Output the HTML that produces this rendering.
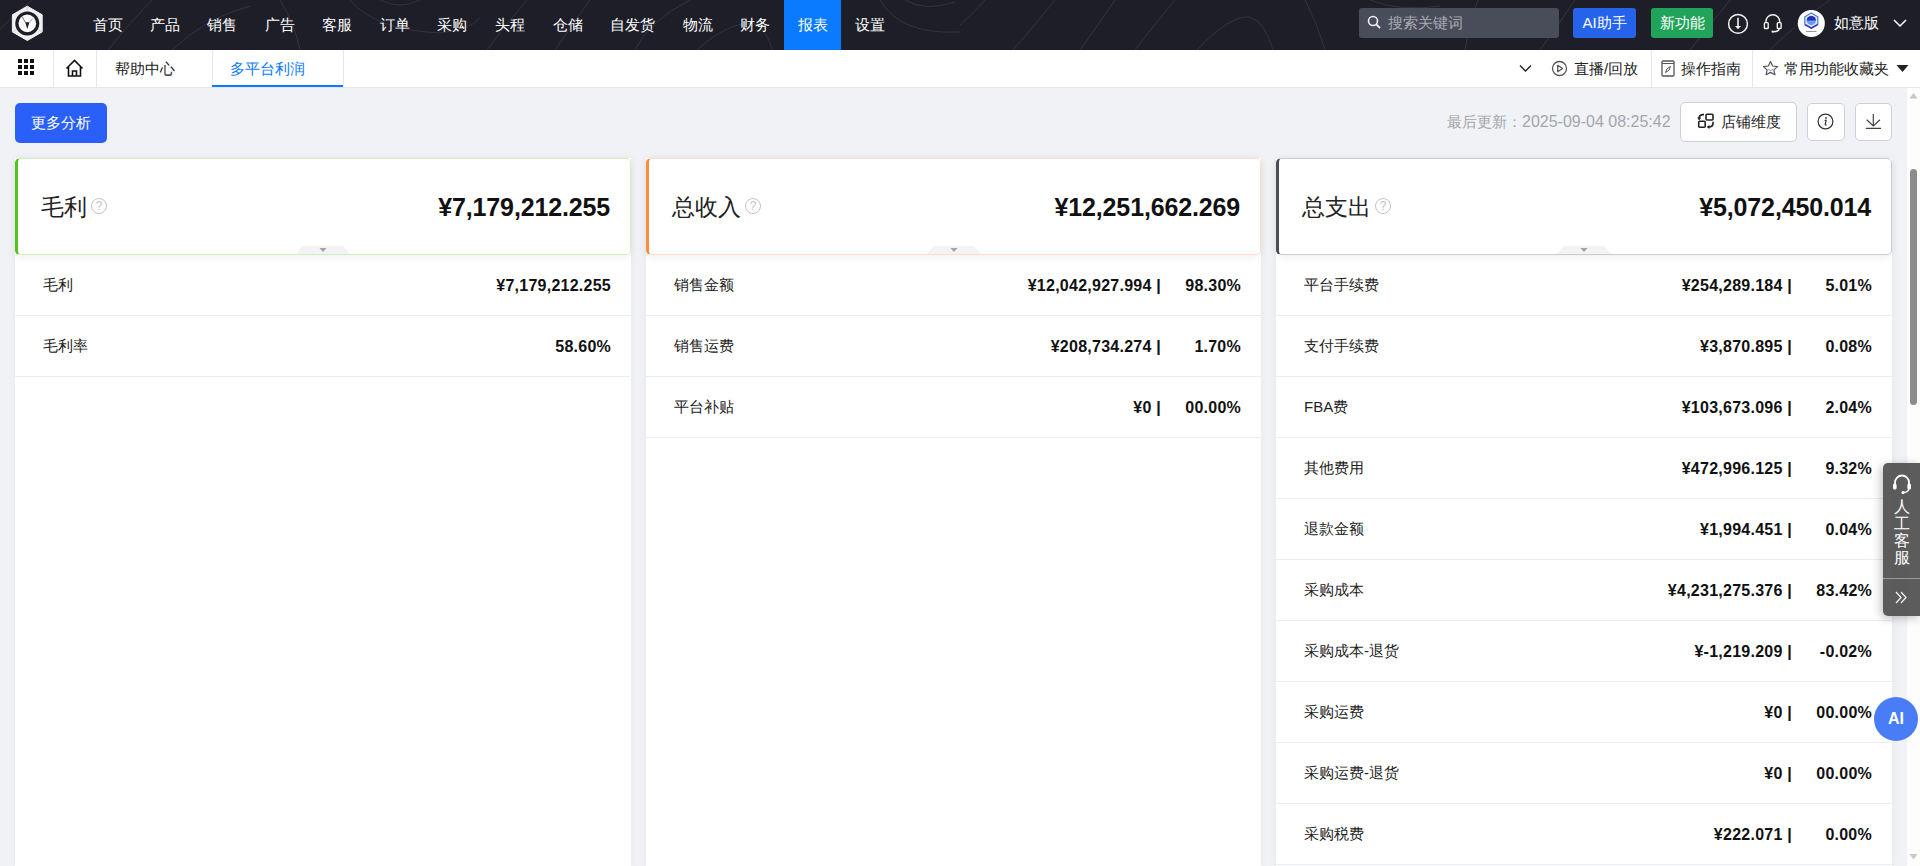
<!DOCTYPE html>
<html><head><meta charset="utf-8">
<style>
*{box-sizing:border-box;margin:0;padding:0}
html,body{width:1920px;height:866px;overflow:hidden;background:#f0f2f5;font-family:"Liberation Sans",sans-serif;color:#222}
.abs{position:absolute}
#top{position:absolute;left:0;top:0;width:1920px;height:50px;background:#1e1e28;overflow:hidden}
.nav{position:absolute;top:0;height:50px;line-height:49px;color:#fff;font-size:15px;font-weight:500;white-space:nowrap}
.nav.active{background:#0a7bff}
#bar2{position:absolute;left:0;top:50px;width:1920px;height:38px;background:#fff;border-bottom:1px solid #e4e6eb}
.vsep{position:absolute;top:0;width:1px;height:37px;background:#e6e8ec}
.t14{font-size:15px;color:#222}
.card{position:absolute;background:#fff;box-shadow:0 0 8px rgba(0,0,0,0.05)}
.hdr{position:absolute;left:0;top:0;height:97px;background:#fff;border:1px solid;border-left-width:3px;border-radius:5px;box-shadow:0 3px 8px rgba(0,0,0,0.06)}
.title{position:absolute;left:23px;top:33px;font-size:23px;color:#222;line-height:30px}
.q{display:inline-block;width:16px;height:16px;border:1px solid #c4c4c4;border-radius:50%;color:#c4c4c4;font-size:12px;line-height:14px;text-align:center;vertical-align:5px;margin-left:4px}
.big{position:absolute;right:20px;top:32px;font-size:25px;font-weight:bold;color:#111;line-height:32px;letter-spacing:-0.15px}
.row{position:absolute;left:0;height:61px;border-bottom:1px solid #e9eef5;width:100%}
.row .lab{position:absolute;left:28px;top:0;line-height:60px;font-size:15px;color:#222}
.row .val{position:absolute;right:20px;top:1px;letter-spacing:0.25px;line-height:60px;font-size:16px;font-weight:bold;color:#111;white-space:pre}
.tab{position:absolute;width:54px;height:8px;left:50%;margin-left:-28px;bottom:0}
</style></head><body>
<div id="top">
  <svg class="abs" style="left:0;top:0" width="1920" height="50">
    <g fill="none" stroke="#33333f" stroke-width="1">
      <path d="M0 29 Q18 12 32 0"/>
      <path d="M108 50 Q130 22 152 0"/>
      <path d="M172 50 Q205 18 250 6"/>
      <path d="M280 0 Q295 25 300 50"/>
      <path d="M350 0 Q375 30 440 33 Q470 30 480 18"/>
      <path d="M380 0 Q400 10 420 0"/>
      <path d="M487 50 Q505 25 527 0"/>
      <path d="M555 50 Q572 25 590 0"/>
      <path d="M635 50 Q650 20 690 0"/>
      <path d="M697 50 Q730 20 755 24 Q768 32 772 50"/>
      <path d="M880 0 Q900 35 960 32"/>
      <path d="M905 0 Q925 12 955 2"/>
      <path d="M960 25 Q975 12 985 0"/>
      <path d="M1013 50 Q1035 25 1055 0"/>
      <path d="M1080 50 Q1098 25 1115 0"/>
      <path d="M1135 50 Q1150 30 1175 0"/>
      <path d="M1197 50 Q1230 15 1250 17 Q1265 22 1273 50"/>
      <path d="M1305 0 Q1318 25 1325 50"/>
      <path d="M1370 0 Q1400 12 1440 6"/>
      <path d="M1465 50 Q1470 20 1478 0"/>
      <path d="M1540 50 Q1558 25 1575 0"/>
      <path d="M1690 50 Q1710 25 1730 0"/>
      <path d="M1770 50 Q1800 20 1830 0"/>
    </g>
  </svg>
  <svg class="abs" style="left:0;top:0" width="50" height="50">
    <polygon points="27.3,6.2 42.2,14.8 42.2,31.9 27.3,40.5 12.4,31.9 12.4,14.8" fill="#f0f0f0" stroke="#f0f0f0" stroke-width="1" stroke-linejoin="round"/>
    <path d="M27.3 6.5 V11 M12.6 31.8 L16.5 29.5 M42 31.8 L38 29.5" stroke="#c8c8c8" stroke-width="0.8"/>
    <circle cx="27.3" cy="23.4" r="12" fill="#1e1e28"/>
    <circle cx="27.3" cy="23.4" r="8.8" fill="#fafafa"/>
    <path d="M25.2 22.2 L29.4 22.2 L27.3 29 Z" fill="#1e1e28"/>
    <path d="M22.5 17 Q24 20.5 25.5 22.3" stroke="#1e1e28" stroke-width="0.6" fill="none"/>
    <path d="M32.5 18.5 Q31 21.5 29.3 22.3" stroke="#1e1e28" stroke-width="0.4" fill="none"/>
  </svg>
  <div class="abs" style="left:784px;top:0;width:57px;height:50px;background:#0a7bff"></div>
  <div class="nav" style="left:92.5px">首页</div>
  <div class="nav" style="left:149.5px">产品</div>
  <div class="nav" style="left:207px">销售</div>
  <div class="nav" style="left:264.5px">广告</div>
  <div class="nav" style="left:322px">客服</div>
  <div class="nav" style="left:380px">订单</div>
  <div class="nav" style="left:437px">采购</div>
  <div class="nav" style="left:495px">头程</div>
  <div class="nav" style="left:552.5px">仓储</div>
  <div class="nav" style="left:610px">自发货</div>
  <div class="nav" style="left:682.5px">物流</div>
  <div class="nav" style="left:740px">财务</div>
  <div class="nav" style="left:797.5px">报表</div>
  <div class="nav" style="left:855px">设置</div>

  <div class="abs" style="left:1359px;top:8px;width:200px;height:30px;background:#494d5a;border-radius:3px"></div>
  <svg class="abs" style="left:1367px;top:15px" width="14" height="15"><circle cx="6" cy="6" r="4.5" fill="none" stroke="#eee" stroke-width="1.6"/><path d="M9.3 9.3 L13 13" stroke="#eee" stroke-width="1.8"/></svg>
  <div class="abs" style="left:1388px;top:8px;line-height:30px;font-size:15px;color:#a8abb3">搜索关键词</div>
  <div class="abs" style="left:1573px;top:8px;width:63px;height:30px;background:#2563eb;border-radius:3px;color:#fff;font-size:15px;line-height:30px;text-align:center">AI助手</div>
  <div class="abs" style="left:1651px;top:8px;width:62px;height:30px;background:#22a35a;border-radius:3px;color:#fff;font-size:15px;line-height:30px;text-align:center">新功能</div>
  <svg class="abs" style="left:1727px;top:13px" width="22" height="22"><circle cx="11" cy="10.9" r="9.4" fill="none" stroke="#f2f2f2" stroke-width="1.5"/><path d="M11 4.8 V13.5" stroke="#f2f2f2" stroke-width="1.6"/><path d="M7.9 13 H14.1 L11 16.3 Z" fill="#f2f2f2"/></svg>
  <svg class="abs" style="left:1762px;top:13px" width="22" height="22"><path d="M3.9 9.2 V8.6 A6.9 6.9 0 0 1 17.7 8.6 V9.2" fill="none" stroke="#f2f2f2" stroke-width="1.4"/><rect x="2.4" y="9.6" width="3.8" height="5.9" rx="0.8" fill="none" stroke="#f2f2f2" stroke-width="1.4"/><rect x="15.3" y="9.6" width="3.8" height="5.9" rx="0.8" fill="none" stroke="#f2f2f2" stroke-width="1.4"/><path d="M17.2 15.5 Q17.2 18.6 11 18.8" stroke="#f2f2f2" stroke-width="1.4" fill="none"/><circle cx="10.6" cy="18.7" r="1.1" fill="#f2f2f2"/></svg>
  <svg class="abs" style="left:1797px;top:10px" width="28" height="28"><circle cx="14.3" cy="13.4" r="13.5" fill="#fff"/><polygon points="14.3,3 20.8,6.8 20.8,14.3 14.3,18.1 7.8,14.3 7.8,6.8" fill="#dfe9fb" stroke="#4f7fe6" stroke-width="1.3"/><circle cx="14.3" cy="10.6" r="4.6" fill="#6d9cf0"/><path d="M9.7 10.6 A4.6 4.6 0 0 1 18.9 10.6 Z" fill="#2a2fb8"/><path d="M8 14.6 L14.3 18.1 L20.6 14.6" stroke="#3535c0" stroke-width="1.6" fill="none"/><path d="M9 21.5 H19.5" stroke="#9a9a9a" stroke-width="1"/></svg>
  <div class="abs" style="left:1834px;top:8px;line-height:30px;font-size:15px;color:#fff">如意版</div>
  <svg class="abs" style="left:1893px;top:18px" width="14" height="10"><path d="M1 2 L7 8 L13 2" stroke="#fff" stroke-width="1.5" fill="none"/></svg>
</div>

<div id="bar2">
  <svg class="abs" style="left:18px;top:9px" width="17" height="17">
    <g fill="#111"><rect x="0" y="0" width="4" height="4"/><rect x="6" y="0" width="4" height="4"/><rect x="12" y="0" width="4" height="4"/>
    <rect x="0" y="6" width="4" height="4"/><rect x="6" y="6" width="4" height="4"/><rect x="12" y="6" width="4" height="4"/>
    <rect x="0" y="12" width="4" height="4"/><rect x="6" y="12" width="4" height="4"/><rect x="12" y="12" width="4" height="4"/></g>
  </svg>
  <div class="vsep" style="left:53px"></div>
  <svg class="abs" style="left:65px;top:9px" width="19" height="19"><path d="M1.5 9.5 L9.5 1.5 L17.5 9.5 M3.5 8 V17 H15.5 V8 M7.5 17 V12 H11.5 V17" fill="none" stroke="#111" stroke-width="1.6"/></svg>
  <div class="vsep" style="left:96px"></div>
  <div class="abs t14" style="left:115px;top:0;line-height:37px">帮助中心</div>
  <div class="vsep" style="left:212px"></div>
  <div class="abs" style="left:212px;top:0;width:132px;height:37px;border-bottom:2.5px solid #0a7bff"></div>
  <div class="abs" style="left:230px;top:0;line-height:37px;font-size:15px;font-weight:500;color:#0a7bff">多平台利润</div>
  <div class="vsep" style="left:343px"></div>

  <svg class="abs" style="left:1519px;top:14px" width="13" height="9"><path d="M1 1.5 L6.5 7 L12 1.5" stroke="#222" stroke-width="1.4" fill="none"/></svg>
  <svg class="abs" style="left:1551px;top:10px" width="17" height="17"><circle cx="8.5" cy="8.5" r="7" fill="none" stroke="#555" stroke-width="1.3"/><path d="M6.7 5.3 L11.6 8.5 L6.7 11.7 Z" fill="none" stroke="#555" stroke-width="1.3" stroke-linejoin="round"/></svg>
  <div class="abs t14" style="left:1574px;top:0;line-height:37px">直播/回放</div>
  <div class="vsep" style="left:1651px"></div>
  <svg class="abs" style="left:1661px;top:10px" width="14" height="17"><rect x="1" y="1" width="12" height="15" rx="1" fill="none" stroke="#555" stroke-width="1.3"/><path d="M1 3.5 H13" stroke="#555" stroke-width="1"/><path d="M4.5 12.5 Q5 8 9.5 6.5 Q9 11 4.5 12.5 Z" fill="none" stroke="#555" stroke-width="1"/></svg>
  <div class="abs t14" style="left:1681px;top:0;line-height:37px">操作指南</div>
  <div class="vsep" style="left:1752px"></div>
  <svg class="abs" style="left:1762px;top:10px" width="17" height="17"><path d="M8.5 1.5 L10.6 6 L15.5 6.6 L11.9 9.9 L12.9 14.8 L8.5 12.4 L4.1 14.8 L5.1 9.9 L1.5 6.6 L6.4 6 Z" fill="none" stroke="#555" stroke-width="1.2" stroke-linejoin="round"/><path d="M6 9.5 Q8.5 11.5 11 9.5" stroke="#7d8ff0" stroke-width="1" fill="none"/></svg>
  <div class="abs t14" style="left:1784px;top:0;line-height:37px">常用功能收藏夹</div>
  <svg class="abs" style="left:1896px;top:14px" width="13" height="9"><path d="M0.5 1 L12.5 1 L6.5 8 Z" fill="#222"/></svg>
</div>

<!-- toolbar -->
<div class="abs" style="left:15px;top:103px;width:92px;height:40px;background:#2a5ff8;border-radius:5px;color:#fff;font-size:15px;line-height:40px;text-align:center">更多分析</div>
<div class="abs" style="left:1447px;top:107px;line-height:30px;font-size:15px;color:#a3a6ad">最后更新：<span style="font-size:16px">2025-09-04 08:25:42</span></div>
<div class="abs" style="left:1680px;top:102px;width:117px;height:40px;background:#fff;border:1px solid #cdd0d7;border-radius:5px"></div>
<svg class="abs" style="left:1690px;top:106px" width="30" height="30"><g fill="none" stroke="#222" stroke-width="1.6"><rect x="16" y="8.2" width="7" height="5.8" rx="1"/><rect x="8.7" y="15.2" width="6.5" height="6" rx="1"/><path d="M9.2 13.3 V12 Q9.2 9 12.5 8.6 H14"/><path d="M23 15.8 V17.5 Q23 20.6 19.6 21 H17.8"/></g><path d="M7.2 11.6 L11.2 11.6 L9.2 14.4 Z" fill="#222"/><path d="M19.5 19 L19.5 23 L16.8 21 Z" fill="#222"/></svg>
<div class="abs t14" style="left:1721px;top:102px;line-height:40px">店铺维度</div>
<div class="abs" style="left:1807px;top:103px;width:38px;height:38px;background:#fff;border:1px solid #cdd0d7;border-radius:5px"></div>
<svg class="abs" style="left:1816px;top:112px" width="20" height="20"><circle cx="9.5" cy="9.5" r="7.4" fill="none" stroke="#333" stroke-width="1.2"/><circle cx="10" cy="5.9" r="0.9" fill="#333"/><path d="M8.6 8.3 H10.1 L9.2 12.4 Q9 13.2 10.6 12.8" stroke="#333" stroke-width="1.2" fill="none"/></svg>
<div class="abs" style="left:1855px;top:103px;width:37px;height:38px;background:#fff;border:1px solid #cdd0d7;border-radius:5px"></div>
<svg class="abs" style="left:1864px;top:112px" width="20" height="20"><path d="M9.3 2 V14 M2.7 7.8 L9.3 14 L16 7.8 M1.8 16.4 H17" stroke="#444" stroke-width="1.2" fill="none"/></svg>

<!-- cards -->
<!--CARDS-->
<div class="card" style="left:15px;top:158px;width:616px;height:708px">
<div class="row" style="top:97px"><span class="lab">毛利</span><span class="val">¥7,179,212.255</span></div>
<div class="row" style="top:158px"><span class="lab">毛利率</span><span class="val">58.60%</span></div>
<div class="hdr" style="width:616px;border-color:#d3f1bf;border-left-color:#52c41a"><div class="title">毛利<span class="q">?</span></div><div class="big">¥7,179,212.255</div><svg class="tab" width="54" height="8" viewBox="0 0 54 8"><path d="M0 8 L7 0 H47 L54 8 Z" fill="#f3f3f5"/><path d="M23.5 2 H30.5 L27 6 Z" fill="#a3a3a3"/></svg></div>
</div>
<div class="card" style="left:646px;top:158px;width:615px;height:708px">
<div class="row" style="top:97px"><span class="lab">销售金额</span><span class="val" style="right:100px">¥12,042,927.994 |</span><span class="val">98.30%</span></div>
<div class="row" style="top:158px"><span class="lab">销售运费</span><span class="val" style="right:100px">¥208,734.274 |</span><span class="val">1.70%</span></div>
<div class="row" style="top:219px"><span class="lab">平台补贴</span><span class="val" style="right:100px">¥0 |</span><span class="val">00.00%</span></div>
<div class="hdr" style="width:615px;border-color:#ffdfcb;border-left-color:#fa8c3c"><div class="title">总收入<span class="q">?</span></div><div class="big">¥12,251,662.269</div><svg class="tab" width="54" height="8" viewBox="0 0 54 8"><path d="M0 8 L7 0 H47 L54 8 Z" fill="#f3f3f5"/><path d="M23.5 2 H30.5 L27 6 Z" fill="#a3a3a3"/></svg></div>
</div>
<div class="card" style="left:1276px;top:158px;width:616px;height:708px">
<div class="row" style="top:97px"><span class="lab">平台手续费</span><span class="val" style="right:100px">¥254,289.184 |</span><span class="val">5.01%</span></div>
<div class="row" style="top:158px"><span class="lab">支付手续费</span><span class="val" style="right:100px">¥3,870.895 |</span><span class="val">0.08%</span></div>
<div class="row" style="top:219px"><span class="lab">FBA费</span><span class="val" style="right:100px">¥103,673.096 |</span><span class="val">2.04%</span></div>
<div class="row" style="top:280px"><span class="lab">其他费用</span><span class="val" style="right:100px">¥472,996.125 |</span><span class="val">9.32%</span></div>
<div class="row" style="top:341px"><span class="lab">退款金额</span><span class="val" style="right:100px">¥1,994.451 |</span><span class="val">0.04%</span></div>
<div class="row" style="top:402px"><span class="lab">采购成本</span><span class="val" style="right:100px">¥4,231,275.376 |</span><span class="val">83.42%</span></div>
<div class="row" style="top:463px"><span class="lab">采购成本-退货</span><span class="val" style="right:100px">¥-1,219.209 |</span><span class="val">-0.02%</span></div>
<div class="row" style="top:524px"><span class="lab">采购运费</span><span class="val" style="right:100px">¥0 |</span><span class="val">00.00%</span></div>
<div class="row" style="top:585px"><span class="lab">采购运费-退货</span><span class="val" style="right:100px">¥0 |</span><span class="val">00.00%</span></div>
<div class="row" style="top:646px"><span class="lab">采购税费</span><span class="val" style="right:100px">¥222.071 |</span><span class="val">0.00%</span></div>
<div class="hdr" style="width:616px;border-color:#c9cbd0;border-left-color:#4a4d57"><div class="title">总支出<span class="q">?</span></div><div class="big">¥5,072,450.014</div><svg class="tab" width="54" height="8" viewBox="0 0 54 8"><path d="M0 8 L7 0 H47 L54 8 Z" fill="#f3f3f5"/><path d="M23.5 2 H30.5 L27 6 Z" fill="#a3a3a3"/></svg></div>
</div>
<!--/CARDS-->

<!-- scrollbar -->
<div class="abs" style="left:1907px;top:88px;width:13px;height:778px;background:#fdfdfd"></div>
<svg class="abs" style="left:1907px;top:88px" width="13" height="778"><path d="M2.5 10.5 L6.5 5 L10.5 10.5 Z" fill="#c8c8c8"/><path d="M2.5 766 L6.5 771.5 L10.5 766 Z" fill="#c8c8c8"/></svg>
<div class="abs" style="left:1910px;top:169px;width:7px;height:236px;background:#8c8c8c;border-radius:3.5px"></div>

<!-- float service -->
<div class="abs" style="left:1883px;top:463px;width:37px;height:153px;background:rgba(80,80,80,0.93);border-radius:5px 0 0 5px;box-shadow:-2px 2px 10px rgba(0,0,0,.25)"></div>
<svg class="abs" style="left:1891px;top:473px" width="22" height="21"><path d="M4 12 V9.5 A7 7 0 0 1 18 9.5 V12" fill="none" stroke="#fff" stroke-width="1.8"/><rect x="2" y="10.5" width="3.6" height="6" rx="1.6" fill="#fff"/><rect x="16.4" y="10.5" width="3.6" height="6" rx="1.6" fill="#fff"/><path d="M18 16 Q17 19 13 19.5" stroke="#fff" stroke-width="1.4" fill="none"/><circle cx="12" cy="19.5" r="1.6" fill="#fff"/></svg>
<div class="abs" style="left:1893px;top:498px;width:17px;font-size:16px;line-height:17px;color:#fff;text-align:center">人<br>工<br>客<br>服</div>
<div class="abs" style="left:1883px;top:578px;width:37px;height:1px;background:#9a9a9a"></div>
<svg class="abs" style="left:1894px;top:590px" width="14" height="15"><path d="M2 2 L7 7.5 L2 13 M7 2 L12 7.5 L7 13" stroke="#eee" stroke-width="1.3" fill="none"/></svg>
<div class="abs" style="left:1874px;top:697px;width:44px;height:44px;border-radius:50%;background:#487df7;color:#fff;font-weight:bold;font-size:16px;line-height:44px;text-align:center">AI</div>
</body></html>
